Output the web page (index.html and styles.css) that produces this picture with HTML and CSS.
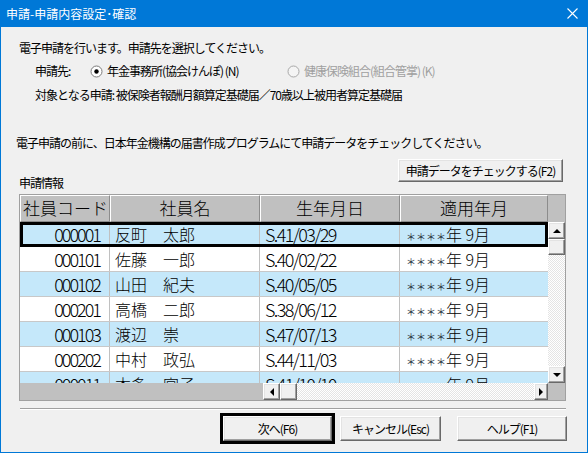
FILE: index.html
```html
<!DOCTYPE html>
<html lang="ja">
<head>
<meta charset="utf-8">
<title>申請-申請内容設定･確認</title>
<link rel="stylesheet" href="styles.css">
</head>
<body>
<div class="window">
  <header class="titlebar">
    <span class="title">申請-申請内容設定･確認</span>
    <svg class="close" width="11" height="11" viewBox="0 0 11 11"><path d="M0.5 0.5L10.5 10.5M10.5 0.5L0.5 10.5" stroke="#fff" stroke-width="1.1"/></svg>
  </header>
  <main class="content">
    <p class="line intro">電子申請を行います。申請先を選択してください。</p>
    <div class="line dest">
      <span class="dest-label">申請先:</span>
      <span class="radio opt1"><svg width="13" height="13" viewBox="0 0 13 13"><circle cx="6.5" cy="6.5" r="5.5" fill="#fff" stroke="#7a7a7a"/><circle cx="6.5" cy="6.5" r="2.2" fill="#000"/></svg>年金事務所(協会けんぽ) (N)</span>
      <span class="radio disabled"><svg width="13" height="13" viewBox="0 0 13 13"><circle cx="6.5" cy="6.5" r="5.5" fill="#f4f4f4" stroke="#a8a8a8"/></svg>健康保険組合(組合管掌) (K)</span>
    </div>
    <p class="line target">対象となる申請: 被保険者報酬月額算定基礎届／70歳以上被用者算定基礎届</p>
    <p class="line notice">電子申請の前に、日本年金機構の届書作成プログラムにて申請データをチェックしてください。</p>
    <div class="info-head">
      <span class="info-label">申請情報</span>
      <button class="btn check">申請データをチェックする(F2)</button>
    </div>
    <div class="grid">
      <div class="ghead">
        <div class="hc first">社員コード</div>
        <div class="hc">社員名</div>
        <div class="hc">生年月日</div>
        <div class="hc">適用年月</div>
      </div>
      <div class="hfill"></div>
      <div class="gbody">
        <div class="row alt sel"><div class="c code">000001</div><div class="c name">反町　太郎</div><div class="c date">S.41/03/29</div><div class="c ym"><span class="stars">＊＊＊＊</span>年 9月</div></div>
        <div class="row"><div class="c code">000101</div><div class="c name">佐藤　一郎</div><div class="c date">S.40/02/22</div><div class="c ym"><span class="stars">＊＊＊＊</span>年 9月</div></div>
        <div class="row alt"><div class="c code">000102</div><div class="c name">山田　紀夫</div><div class="c date">S.40/05/05</div><div class="c ym"><span class="stars">＊＊＊＊</span>年 9月</div></div>
        <div class="row"><div class="c code">000201</div><div class="c name">高橋　二郎</div><div class="c date">S.38/06/12</div><div class="c ym"><span class="stars">＊＊＊＊</span>年 9月</div></div>
        <div class="row alt"><div class="c code">000103</div><div class="c name">渡辺　崇</div><div class="c date">S.47/07/13</div><div class="c ym"><span class="stars">＊＊＊＊</span>年 9月</div></div>
        <div class="row"><div class="c code">000202</div><div class="c name">中村　政弘</div><div class="c date">S.44/11/03</div><div class="c ym"><span class="stars">＊＊＊＊</span>年 9月</div></div>
        <div class="row alt"><div class="c code">000011</div><div class="c name">本多　宮子</div><div class="c date">S.41/10/10</div><div class="c ym"><span class="stars">＊＊＊＊</span>年 9月</div></div>
      </div>
      <div class="vscroll">
        <div class="sbtn up"></div>
        <div class="sbtn vthumb"></div>
        <div class="track"></div>
        <div class="sbtn down"></div>
      </div>
      <div class="hscroll">
        <div class="hgrey"></div>
        <div class="sbtn left"></div>
        <div class="sbtn hthumb"></div>
        <div class="track"></div>
        <div class="sbtn right"></div>
      </div>
      <div class="corner"></div>
    </div>
    <hr class="sep">
    <div class="actions">
      <div class="default"><button class="btn next">次へ(F6)</button></div>
      <button class="btn cancel">キャンセル(Esc)</button>
      <button class="btn help">ヘルプ(F1)</button>
    </div>
  </main>
</div>
</body>
</html>
```
FILE: styles.css
```css
* { box-sizing: border-box; }
html, body { margin: 0; padding: 0; }
body {
  background: #f0f0f0;
  font-family: "Noto Sans CJK JP", sans-serif;
  font-size: 12px;
  color: #000;
}
.window {
  width: 588px;
  height: 453px;
  border: 1px solid #0078d7;
  border-top: none;
  background: #f0f0f0;
  display: flex;
  flex-direction: column;
}
.titlebar {
  height: 27px;
  flex: none;
  background: #0078d7;
  color: #fff;
  display: flex;
  align-items: center;
  justify-content: space-between;
  padding: 0 9px 0 5px;
}
.title { font-size: 12px; line-height: 16px; }
.content { padding: 13px 20px 0 18px; }
.line {
  margin: 0;
  height: 16px;
  line-height: 16px;
  letter-spacing: -1px;
  white-space: nowrap;
}
.dest {
  margin-top: 7px;
  padding-left: 16px;
  display: flex;
  align-items: center;
}
.dest-label { width: 55px; }
.radio { display: flex; align-items: center; gap: 4px; }
.opt1 { width: 197px; }
.disabled { color: #a0a0a0; }
.target { margin-top: 8px; padding-left: 16px; }
.notice { margin-top: 32px; margin-left: -3px; }
.info-head {
  margin-top: 8px;
  height: 32px;
  display: flex;
  justify-content: space-between;
  align-items: flex-end;
}
.info-label { line-height: 16px; letter-spacing: -1px; }
.btn {
  font-family: inherit;
  font-size: 12px;
  letter-spacing: -1px;
  color: #000;
  background: #f0f0f0;
  border: 1px solid;
  border-color: #fff #696969 #696969 #fff;
  box-shadow: inset -1px -1px #a0a0a0, inset 1px 1px #e3e3e3;
  padding: 0;
  display: flex;
  align-items: center;
  justify-content: center;
  white-space: nowrap;
}
.check { width: 165px; height: 23px; margin: 0 4px 9px 0; }

.grid {
  margin-top: 3px;
  width: 547px;
  border: 1px solid #a0a0a0;
  display: grid;
  grid-template-columns: 528px 17px;
  grid-template-rows: 27px 161px 17px;
  background: #c0c0c0;
}
.ghead {
  display: grid;
  grid-template-columns: 90px 150px 140px 148px;
}
.hc {
  background: #c0c0c0;
  border-top: 1px solid #fff;
  border-left: 1px solid #fff;
  border-right: 1px solid #8c8c8c;
  border-bottom: 1px solid #8c8c8c;
  font-size: 17px;
  font-weight: 300;
  line-height: 24px;
  text-align: center;
  white-space: nowrap;
  overflow: hidden;
}
.hc.first { text-align: left; padding-left: 2px; }
.hfill { background: #c0c0c0; }
.gbody { overflow: hidden; background: #fff; }
.row {
  position: relative;
  display: grid;
  grid-template-columns: 90px 150px 140px 148px;
  height: 25px;
  border-bottom: 1px solid #c8c8c8;
  background: #fff;
}
.row.alt { background: #c5e8fa; }
.row.sel::after {
  content: "";
  position: absolute;
  top: 0;
  left: 0;
  right: 0;
  bottom: -1px;
  border: 3px solid #000;
}
.c {
  border-right: 1px solid #c0c0c0;
  display: flex;
  align-items: center;
  font-size: 16px;
  font-weight: 300;
  white-space: nowrap;
  overflow: hidden;
}
.c.code {
  justify-content: flex-end;
  padding-right: 9px;
  font-size: 18px;
  letter-spacing: -2px;
}
.c.name { padding-left: 5px; }
.c.date { padding-left: 5px; font-size: 18px; letter-spacing: -1.6px; }
.c.ym { padding-left: 6px; border-right: none; }
.stars { font-size: 10px; font-weight: 400; color: #2a3242; margin-top: 5px; }

.vscroll { display: flex; flex-direction: column; }
.sbtn {
  flex: none;
  background: #f0f0f0;
  border: 1px solid;
  border-color: #fff #696969 #696969 #fff;
  box-shadow: inset -1px -1px #a0a0a0, inset 1px 1px #e3e3e3;
  display: flex;
  align-items: center;
  justify-content: center;
}
.vscroll .sbtn { height: 17px; }
.vscroll .vthumb { height: 16px; }
.track {
  flex: 1;
  background-color: #fff;
  background-image: repeating-conic-gradient(#e4e4e4 0 25%, #fff 0 50%);
  background-size: 2px 2px;
}
.hscroll { display: flex; }
.hgrey { width: 243px; background: #c0c0c0; }
.hscroll .sbtn { width: 17px; }
.hscroll .right { width: 14px; }
.corner { background: #c0c0c0; }
.up::before, .down::before, .left::before, .right::before { content: ""; }
.up::before { border-left: 4px solid transparent; border-right: 4px solid transparent; border-bottom: 4px solid #000; }
.down::before { border-left: 4px solid transparent; border-right: 4px solid transparent; border-top: 4px solid #000; }
.left::before { border-top: 4px solid transparent; border-bottom: 4px solid transparent; border-right: 4px solid #000; }
.right::before { border-top: 4px solid transparent; border-bottom: 4px solid transparent; border-left: 4px solid #000; }

.sep {
  margin: 7px 1px 0 1px;
  height: 2px;
  border: 0;
  border-top: 1px solid #a0a0a0;
  border-bottom: 1px solid #fff;
}
.actions {
  margin-top: 3px;
  display: flex;
  justify-content: flex-end;
  align-items: center;
}
.default { width: 115px; height: 31px; border: 3px solid #000; margin-right: 5px; }
.next { width: 100%; height: 100%; }
.cancel { width: 101px; height: 25px; margin-right: 16px; }
.help { width: 110px; height: 25px; }
```
